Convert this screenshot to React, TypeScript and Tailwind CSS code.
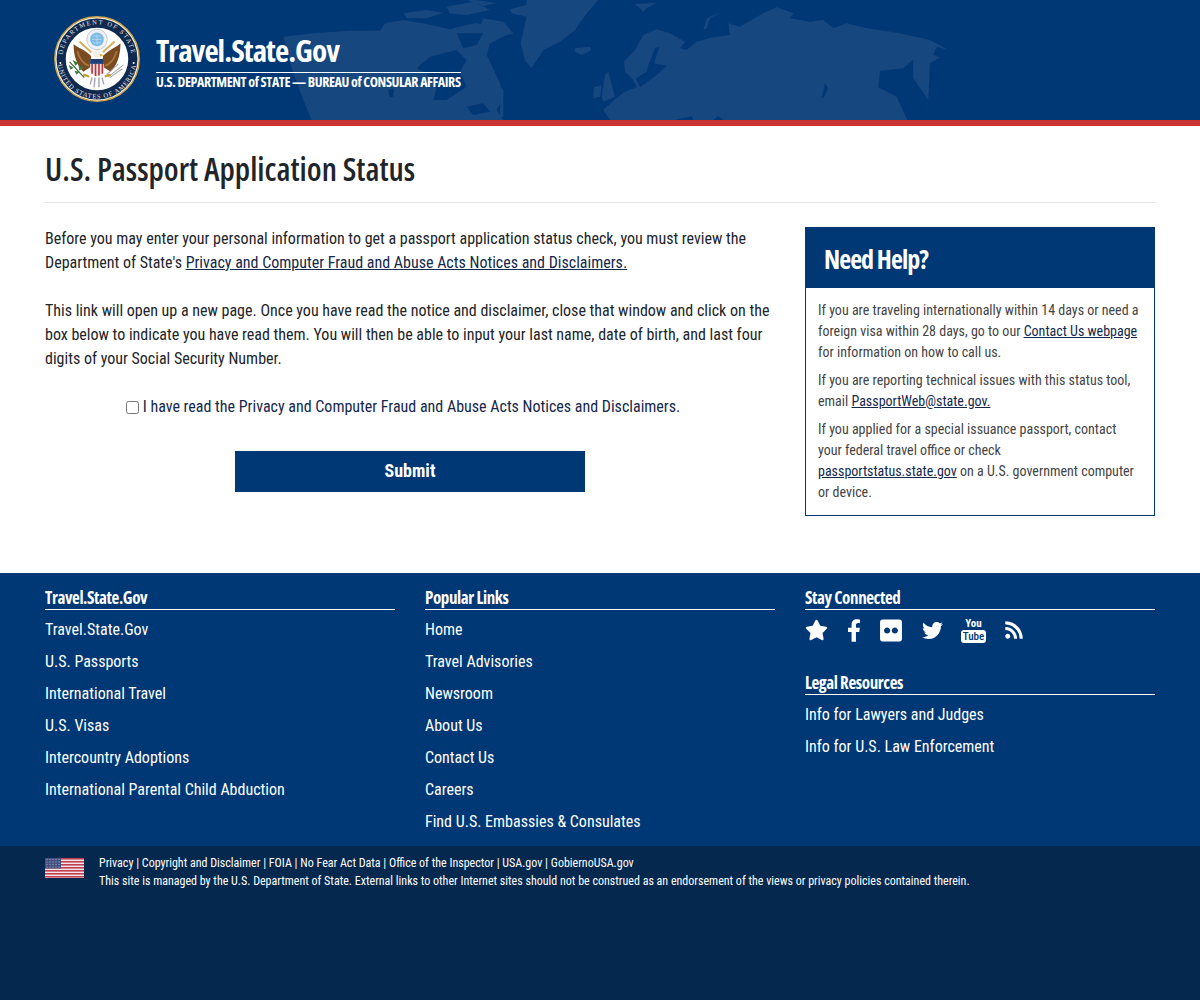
import { FaStar, FaFacebookF, FaFlickr, FaTwitter, FaRss } from "react-icons/fa";

const col1 = [
  "Travel.State.Gov",
  "U.S. Passports",
  "International Travel",
  "U.S. Visas",
  "Intercountry Adoptions",
  "International Parental Child Abduction",
];
const col2 = [
  "Home",
  "Travel Advisories",
  "Newsroom",
  "About Us",
  "Contact Us",
  "Careers",
  "Find U.S. Embassies & Consulates",
];
const legal = ["Info for Lawyers and Judges", "Info for U.S. Law Enforcement"];
const bottomLinks = [
  "Privacy",
  "Copyright and Disclaimer",
  "FOIA",
  "No Fear Act Data",
  "Office of the Inspector",
  "USA.gov",
  "GobiernoUSA.gov",
];

function WorldMap() {
  const land = "#17477f";
  const sea = "#003876";
  return (
    <svg viewBox="0 0 1200 120" className="absolute inset-0 h-[120px] w-[1200px]">
      {/* north america, coords from a 3x crop at x=270 */}
      <g transform="translate(270,0) scale(0.3333)" fill={land}>
        <polygon points="40,110 130,100 240,92 330,92 345,70 400,60 470,72 540,88 590,75 620,70 690,85 700,110 660,130 650,165 690,250 700,290 680,330 700,360 125,360 100,300 70,220" />
        <polygon points="400,40 470,30 520,38 470,55 410,55" />
        <polygon points="530,20 610,5 660,30 590,45 540,40" />
        <polygon points="640,55 700,65 730,100 680,115 630,85" />
        <polygon points="590,0 620,0 680,10 640,18" />
      </g>
      <g transform="translate(270,0) scale(0.3333)" fill={sea}>
        <polygon points="440,205 480,170 560,150 590,180 570,215 590,260 530,300 490,300 500,265 470,220" />
        <polygon points="560,100 640,100 620,135 580,145" />
        <polygon points="355,270 372,265 370,290 358,292" />
        <polygon points="590,320 640,310 660,335 610,345" />
      </g>
      {/* greenland and eurasia, coords from a 3x crop at x=500 */}
      <g transform="translate(500,0) scale(0.3333)" fill={land}>
        <polygon points="80,0 295,0 260,40 225,90 180,125 130,150 95,205 75,180 62,130 80,50 35,40 30,28 80,15" />
        <polygon points="225,145 270,140 275,150 245,165 225,155" />
        <polygon points="405,12 470,8 440,25 430,35 415,20" />
        <polygon points="610,90 620,55 665,35 630,55 620,85" />
        <polygon points="315,225 325,215 345,290 310,305 305,290" />
        <polygon points="282,262 305,255 300,290 280,295" />
        <polygon points="330,360 310,330 345,298 375,275 410,262 400,240 375,215 372,185 405,150 430,105 470,88 510,100 555,125 540,145 560,150 590,125 640,112 690,105 685,70 720,80 745,65 790,40 830,22 880,40 870,55 930,65 970,60 1000,85 1040,70 1100,85 1200,100 1290,120 1345,150 1310,140 1300,165 1320,172 1290,190 1285,300 1275,360" />
        <polygon points="0,260 10,270 10,350 0,350" />
      </g>
      <g transform="translate(500,0) scale(0.3333)" fill={sea}>
        <polygon points="1140,212 1210,205 1240,178 1240,235 1285,300 1275,360 1222,360 1190,290 1135,262" />
        <polygon points="445,195 465,145 478,140 462,190 500,198 470,225 420,262 408,235 440,215" />
        <polygon points="975,250 985,265 970,295 965,295" />
        <polygon points="525,360 575,348 580,360" />
        <polygon points="640,360 655,348 670,360" />
      </g>
    </svg>
  );
}

function Seal() {
  return (
    <svg viewBox="0 0 88 88" className="h-[86px] w-[86px] shrink-0">
      <defs>
        <path id="sealTop" d="M 8.5 44 A 35.5 35.5 0 0 1 79.5 44" />
        <path id="sealBottom" d="M 3.5 44 A 40.5 40.5 0 0 0 84.5 44" />
      </defs>
      <circle cx="44" cy="44" r="43.2" fill="#f4f1df" stroke="#c9a24a" strokeWidth="1.4" />
      <circle cx="44" cy="44" r="41.4" fill="#10294f" />
      <circle cx="44" cy="44" r="32" fill="#fff" />
      <text fontSize="6.6" fill="#e8e8ee" fontFamily="Liberation Serif, serif" letterSpacing="1.5">
        <textPath href="#sealTop" startOffset="50%" textAnchor="middle">DEPARTMENT OF STATE</textPath>
      </text>
      <text fontSize="6.6" fill="#e8e8ee" fontFamily="Liberation Serif, serif" letterSpacing="1">
        <textPath href="#sealBottom" startOffset="50%" textAnchor="middle">UNITED STATES OF AMERICA</textPath>
      </text>
      <circle cx="6.5" cy="48" r="1" fill="#fff" />
      <circle cx="81.5" cy="48" r="1" fill="#fff" />
      {/* crest */}
      <circle cx="44" cy="24" r="10.5" fill="#eef1f5" stroke="#c4c9d2" strokeWidth="1" />
      <circle cx="44" cy="24" r="7" fill="#7dbbe6" />
      <path d="M39 24 H49 M44 19 V29 M40 20.5 H48 M40 27.5 H48" stroke="#cfe6f6" strokeWidth="0.6" />
      {/* wings */}
      <path d="M20 29 C25 33 31 34 38 41 L38 52 L30 57 C24 51 20 42 20 29 Z" fill="#7a4a21" />
      <path d="M68 28 C63 33 57 34 50 41 L50 52 L58 57 C64 51 68 42 68 28 Z" fill="#7a4a21" />
      <path d="M24 36 C26 44 30 49 36 51 M64 36 C62 44 58 49 52 51" stroke="#a9763f" strokeWidth="1.8" fill="none" />
      {/* arrows held up top */}
      <path d="M26 26 L38 37 M62 26 L50 37" stroke="#cdb25f" strokeWidth="2" />
      {/* head */}
      <circle cx="44" cy="39" r="4.2" fill="#f2f0e4" />
      <path d="M47 39 L51 40 L47 41.5 Z" fill="#d9a92f" />
      {/* shield */}
      <path d="M37 44 H51 V55 C51 59 47 60 44 62 C41 60 37 59 37 55 Z" fill="#f5e9ea" />
      <path d="M37 44 H51 V49 H37 Z" fill="#1c3f78" />
      <path d="M39 49 V59 M42.5 49 V61.5 M46 49 V61 M49.5 49 V59" stroke="#b5383f" strokeWidth="1.7" />
      {/* olive branch and arrows */}
      <path d="M16 47 L31 63" stroke="#2f6b31" strokeWidth="1.2" />
      <path d="M15 50 l5 3 l-3 2 Z M19 45 l3 6 l3 -3 Z M21 56 l5 1 l-3 3 Z M25 50 l1 6 l4 -3 Z" fill="#3a7b3c" />
      <path d="M71 50 L56 62 M70 54 L57 63 M66 49 L54 60" stroke="#a9aab0" strokeWidth="1.1" />
      <path d="M30 60 l6 2 M58 60 l-6 2" stroke="#c99a2e" strokeWidth="2.2" />
      {/* tail */}
      <path d="M39 63 L37 70 M42 63 L41 73 M46 63 L46 73 M49 63 L51 70" stroke="#a8a9ad" strokeWidth="1.5" />
    </svg>
  );
}

function Flag() {
  const dots = [1.5, 4, 6.5, 9].flatMap((y) => [2, 5, 8, 11, 14].map((x) => [x, y]));
  return (
    <svg viewBox="0 0 39 20" className="h-5 w-[39px] shrink-0">
      <rect width="39" height="20" fill="#f4e6e8" />
      {[0, 3, 6, 9, 12, 15, 18].map((y) => (
        <rect key={y} y={y} width="39" height="1.6" fill="#c1404f" />
      ))}
      <rect width="16" height="10.5" fill="#44507f" />
      {dots.map(([x, y]) => (
        <circle key={`${x}-${y}`} cx={x} cy={y} r="0.6" fill="#b4b9d0" />
      ))}
    </svg>
  );
}

function FooterHeading({ children }: { children: React.ReactNode }) {
  return (
    <h3 className="h-6 border-b border-white font-['Open_Sans',sans-serif] text-[17px] leading-[23px] font-bold tracking-[-0.4px] [font-stretch:75%] text-white">
      {children}
    </h3>
  );
}

function FooterLinks({ items }: { items: string[] }) {
  return (
    <ul className="mt-1">
      {items.map((item) => (
        <li key={item} className="h-8 text-[16px] leading-8 text-white">
          {item}
        </li>
      ))}
    </ul>
  );
}

function App() {
  return (
    <div className="min-h-[1000px] bg-[#05284f] font-['Roboto',sans-serif] [font-stretch:75%]">
      <header className="relative h-[126px] overflow-hidden border-b-[6px] border-[#cb3333] bg-[#003876]">
        <WorldMap />
        <div className="relative flex items-center gap-4 pt-4 pl-[54px]">
          <Seal />
          <div className="font-['Open_Sans',sans-serif] text-white">
            <div className="border-b border-white text-[31px] leading-[44px] font-bold tracking-[-0.95px]">
              Travel.State.Gov
            </div>
            <div className="text-[14px] leading-[18px] font-bold tracking-[-0.41px] whitespace-nowrap">
              U.S. DEPARTMENT of STATE — BUREAU of CONSULAR AFFAIRS
            </div>
          </div>
        </div>
      </header>

      <main className="bg-white px-[45px]">
        <h1 className="border-b border-[#e3e3e3] pt-[18px] pb-[8px] font-['Open_Sans',sans-serif] text-[32px] leading-[50px] font-semibold [font-stretch:75%] text-[#212529]">
          U.S. Passport Application Status
        </h1>
        <div className="flex gap-[30px] pt-6 pb-[57px]">
          <section className="w-[730px] text-[16px] leading-6 text-[#212529]">
            <p>
              Before you may enter your personal information to get a passport application status check, you must review the Department of State's{" "}
              <a className="text-[#14284b] underline">Privacy and Computer Fraud and Abuse Acts Notices and Disclaimers.</a>
            </p>
            <p className="mt-6">
              This link will open up a new page. Once you have read the notice and disclaimer, close that window and click on the box below to indicate you have read them. You will then be able to input your last name, date of birth, and last four digits of your Social Security Number.
            </p>
            <label className="mt-6 flex items-center justify-center gap-1 pr-[14px] text-[#14284b]">
              <input type="checkbox" className="h-[13px] w-[13px]" />
              <span>I have read the Privacy and Computer Fraud and Abuse Acts Notices and Disclaimers.</span>
            </label>
            <div className="mt-[32px] flex justify-center">
              <button className="h-[41px] w-[350px] bg-[#003876] pb-[2px] text-[18px] font-bold text-white">Submit</button>
            </div>
          </section>
          <aside className="w-[350px] self-start border border-[#003876]">
            <div className="-mx-px -mt-px flex h-[61px] items-center bg-[#003876] pt-[3px] pl-[19px] font-['Open_Sans',sans-serif] text-[26px] font-bold tracking-[-0.95px] text-white">
              Need Help?
            </div>
            <div className="space-y-[7px] px-3 pt-[12px] pb-3 text-[14px] leading-[21px] text-[#444]">
              <p>
                If you are traveling internationally within 14 days or need a foreign visa within 28 days, go to our{" "}
                <a className="text-[#14284b] underline">Contact Us webpage</a> for information on how to call us.
              </p>
              <p>
                If you are reporting technical issues with this status tool, email{" "}
                <a className="text-[#14284b] underline">PassportWeb@state.gov.</a>
              </p>
              <p>
                If you applied for a special issuance passport, contact your federal travel office or check{" "}
                <a className="text-[#14284b] underline">passportstatus.state.gov</a> on a U.S. government computer or device.
              </p>
            </div>
          </aside>
        </div>
      </main>

      <footer className="grid h-[273px] grid-cols-[350px_350px_350px] gap-x-[30px] bg-[#003876] px-[45px] pt-[13px]">
        <div>
          <FooterHeading>Travel.State.Gov</FooterHeading>
          <FooterLinks items={col1} />
        </div>
        <div>
          <FooterHeading>Popular Links</FooterHeading>
          <FooterLinks items={col2} />
        </div>
        <div>
          <FooterHeading>Stay Connected</FooterHeading>
          <div className="mt-[7px] flex h-[26px] items-center gap-5 text-white">
            <FaStar className="h-[22px] w-[23px]" />
            <FaFacebookF className="-mx-px h-[23px] w-[14px]" />
            <FaFlickr className="h-[25px] w-[22px]" />
            <FaTwitter className="h-[21px] w-[21px]" />
            <div className="flex w-[21px] flex-col items-center text-[11px] leading-[12px] font-bold">
              <span>You</span>
              <span className="rounded-[3px] bg-white px-[2px] leading-[13px] font-medium text-[#003876]">Tube</span>
            </div>
            <FaRss className="h-[20px] w-[20px]" />
          </div>
          <div className="mt-[28px]">
            <FooterHeading>Legal Resources</FooterHeading>
            <FooterLinks items={legal} />
          </div>
        </div>
      </footer>

      <div className="flex gap-[15px] px-[45px] pt-[8px] text-[12px] leading-[18px] text-white">
        <div className="pt-1">
          <Flag />
        </div>
        <div>
          <div>{bottomLinks.join(" | ")}</div>
          <div>This site is managed by the U.S. Department of State. External links to other Internet sites should not be construed as an endorsement of the views or privacy policies contained therein.</div>
        </div>
      </div>
    </div>
  );
}

export default App;
